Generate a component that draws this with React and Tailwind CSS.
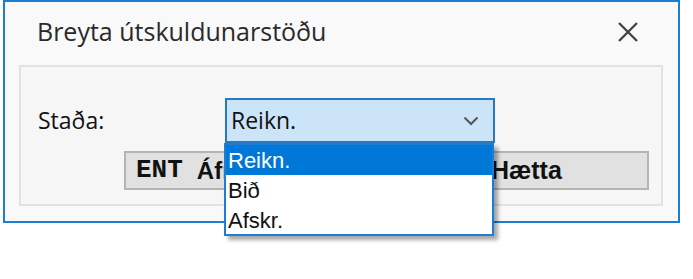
import React from "react";

const SEGOE = { fontFamily: '"Open Sans", "Noto Sans", sans-serif' };

const ITEMS = ["Reikn.", "Bið", "Afskr."];

function CloseIcon() {
  return (
    <svg width="22" height="22" viewBox="0 0 22 22" className="text-[#444]">
      <path d="M2 2 L20 20 M20 2 L2 20" stroke="currentColor" strokeWidth="2.4" fill="none" />
    </svg>
  );
}

function Chevron() {
  return (
    <svg width="16" height="10" viewBox="0 0 16 10" className="text-[#555]">
      <path d="M1.5 1.5 L8 8 L14.5 1.5" stroke="currentColor" strokeWidth="2" fill="none" />
    </svg>
  );
}

export default function App() {
  return (
    <div className="relative w-[693px] h-[279px] bg-white overflow-hidden">
      {/* Dialog */}
      <div className="ml-[3px] w-[677px] h-[223px] border-2 border-[#1a7fd4] bg-[#f9f9f9] flex flex-col">
        {/* Title bar */}
        <div className="h-[63px] flex items-center justify-between pl-[32px] pr-[39px] pb-[3px]">
          <span className="text-[25px] text-[#2a2a2a]" style={SEGOE}>
            Breyta útskuldunarstöðu
          </span>
          <CloseIcon />
        </div>

        {/* Group box */}
        <div className="ml-[14px] w-[644px] h-[141px] border-2 border-[#e2e2e2] bg-[#f6f6f6] flex flex-col">
          <div className="flex items-center mt-[31px] h-[45px]">
            <span className="ml-[17px] w-[187px] text-[23px] text-[#111]" style={SEGOE}>
              Staða:
            </span>
            <div className="w-[270px] h-[45px] border-2 border-[#2a78c2] bg-[#cce4f7] flex items-center justify-between pl-[4px] pr-[14px]">
              <span className="text-[23px] text-[#111]" style={SEGOE}>
                Reikn.
              </span>
              <Chevron />
            </div>
          </div>

          <div className="ml-[103px] mt-[8px] w-[525px] h-[39px] border-2 border-[#b4b4b4] bg-[#e1e1e1] flex items-center pl-[10px] text-[#111]">
            <span className="text-[26px] font-bold" style={{ fontFamily: '"Liberation Mono", monospace' }}>
              ENT
            </span>
            <span className="ml-[14px] text-[24px] font-bold" style={{ fontFamily: '"Liberation Sans", sans-serif' }}>
              Áfram
            </span>
            <span className="ml-[164px] text-[26px] font-bold" style={{ fontFamily: '"Liberation Mono", monospace' }}>
              ESC
            </span>
            <span className="ml-[14px] text-[25px] font-bold" style={{ fontFamily: '"Liberation Sans", sans-serif' }}>
              Hætta
            </span>
          </div>
        </div>
      </div>

      {/* Open dropdown list */}
      <div
        className="absolute left-[224px] top-[143px] w-[270px] h-[93px] border-2 border-[#1a7fd4] bg-white flex flex-col shadow-[4px_4px_4px_rgba(0,0,0,0.35)]"
        style={{ fontFamily: '"Liberation Sans", Arial, sans-serif' }}
      >
        {ITEMS.map((item, i) => (
          <div
            key={item}
            className={`h-[30px] flex items-center pl-[2px] text-[22px] ${
              i === 0 ? "bg-[#0078d7] text-white" : "text-[#111]"
            }`}
          >
            {item}
          </div>
        ))}
      </div>
    </div>
  );
}
